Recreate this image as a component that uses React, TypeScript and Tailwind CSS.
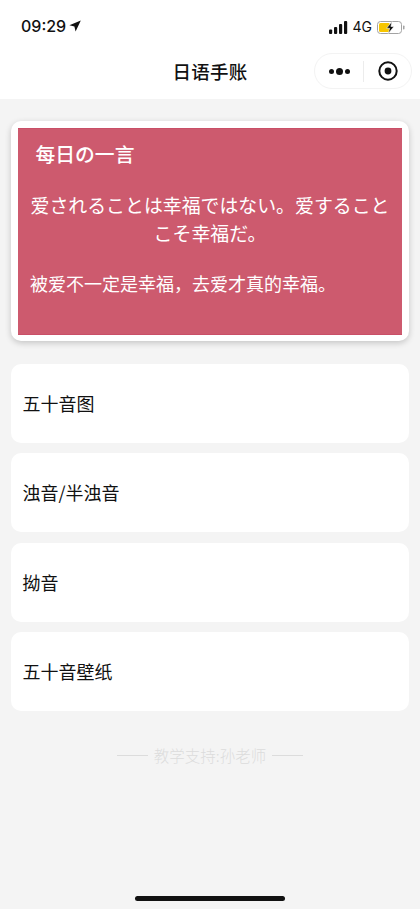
const cjk = "font-['Noto_Sans_CJK_SC','Noto_Sans_CJK_JP',sans-serif]";

function Row({ label }: { label: string }) {
  return (
    <div className="flex h-[79px] items-center rounded-[10px] bg-white pl-[11.5px] text-[18px] text-[#111]">
      {label}
    </div>
  );
}

export default function App() {
  return (
    <div className={`relative flex h-[909px] w-[420px] flex-col overflow-hidden bg-[#f4f4f4] ${cjk}`}>
      <div className="flex h-[98.5px] shrink-0 flex-col bg-white">
        <div className="flex h-[50px] items-start justify-between pl-[21px] pr-[15px] pt-[16px]">
          <div className="flex items-center gap-[3px] font-['Inter',sans-serif] text-[16px] font-medium leading-[20px] text-[#111]">
            <span>09:29</span>
            <svg width="12" height="12" viewBox="0 0 12 12" className="mt-[-1px]">
              <path d="M11.8 0.4 L0.4 5.2 L5.4 6.4 L6.6 11.6 Z" fill="#111" />
            </svg>
          </div>
          <div className="flex items-center gap-[5px] pt-[1px]">
            <svg width="19" height="13" viewBox="0 0 19 13">
              <rect x="0" y="8.5" width="3.2" height="4.5" rx="1" fill="#111" />
              <rect x="5" y="6" width="3.2" height="7" rx="1" fill="#111" />
              <rect x="10" y="3" width="3.2" height="10" rx="1" fill="#111" />
              <rect x="15" y="0" width="3.2" height="13" rx="1" fill="#111" />
            </svg>
            <span className="font-['Inter',sans-serif] text-[14px] leading-[20px] text-[#111]">4G</span>
            <svg width="28" height="13" viewBox="0 0 28 13">
              <rect x="0.5" y="0.5" width="24" height="12" rx="3" fill="none" stroke="#a3a3a3" strokeWidth="1" />
              <rect x="2" y="2" width="11" height="9" rx="1.5" fill="#f7c600" />
              <path d="M15 0.5 L9.5 7.3 L12.6 7.3 L11.3 12.5 L17 5.5 L13.9 5.5 Z" fill="#111" stroke="#fff" strokeWidth="0.6" />
              <rect x="26" y="4.5" width="1.5" height="4" rx="0.7" fill="#a3a3a3" />
            </svg>
          </div>
        </div>
        <div className="relative flex h-[44px] items-center justify-center">
          <span className="text-[18.5px] font-medium tracking-[0.2px] text-[#111]">日语手账</span>
          <div className="absolute left-[314px] top-[3px] flex h-[36px] w-[98px] items-center rounded-full border border-[#f3f3f3] bg-white">
            <div className="flex w-[48px] items-center justify-center gap-[2px] pl-[1px]">
              <span className="h-[5px] w-[5px] rounded-full bg-[#111]" />
              <span className="h-[7px] w-[7px] rounded-full bg-[#111]" />
              <span className="h-[5px] w-[5px] rounded-full bg-[#111]" />
            </div>
            <div className="h-[21px] w-px bg-[#ececec]" />
            <div className="flex flex-1 items-center justify-center">
              <svg width="20" height="20" viewBox="0 0 20 20">
                <circle cx="10" cy="10" r="8.7" fill="none" stroke="#111" strokeWidth="2" />
                <circle cx="10" cy="10" r="3.4" fill="#111" />
              </svg>
            </div>
          </div>
        </div>
      </div>

      <div className="px-[11px] pt-[22.5px]">
        <div className="h-[220px] rounded-[10px] bg-white px-[7px] py-[6.5px] shadow-[0_2px_6px_rgba(0,0,0,0.2)]">
          <div className="h-full border-y border-[#c94f67] bg-[#cd5a6e] px-3 text-white">
            <div className="pl-[5.5px] pt-[11px] text-[19.8px] font-medium leading-[28px]">每日の一言</div>
            <div className="mt-[23px] text-center text-[18.9px] leading-[28px]">
              爱されることは幸福ではない。爱することこそ幸福だ。
            </div>
            <div className="mt-[22px] text-[18px] leading-[28px]">被爱不一定是幸福，去爱才真的幸福。</div>
          </div>
        </div>
        <div className="mt-[23px] flex flex-col gap-[10.33px]">
          <Row label="五十音图" />
          <Row label="浊音/半浊音" />
          <Row label="拗音" />
          <Row label="五十音壁纸" />
        </div>
        <div className="mt-[33px] flex items-center justify-center gap-[6px] text-[15.5px] font-light text-[#dcdcdc]">
          <span className="h-px w-[31px] bg-[#dcdcdc]" />
          <span>教学支持:孙老师</span>
          <span className="h-px w-[31px] bg-[#dcdcdc]" />
        </div>
      </div>

      <div className="absolute bottom-[8px] left-[135px] h-[5px] w-[150px] rounded-full bg-[#111]" />
    </div>
  );
}
